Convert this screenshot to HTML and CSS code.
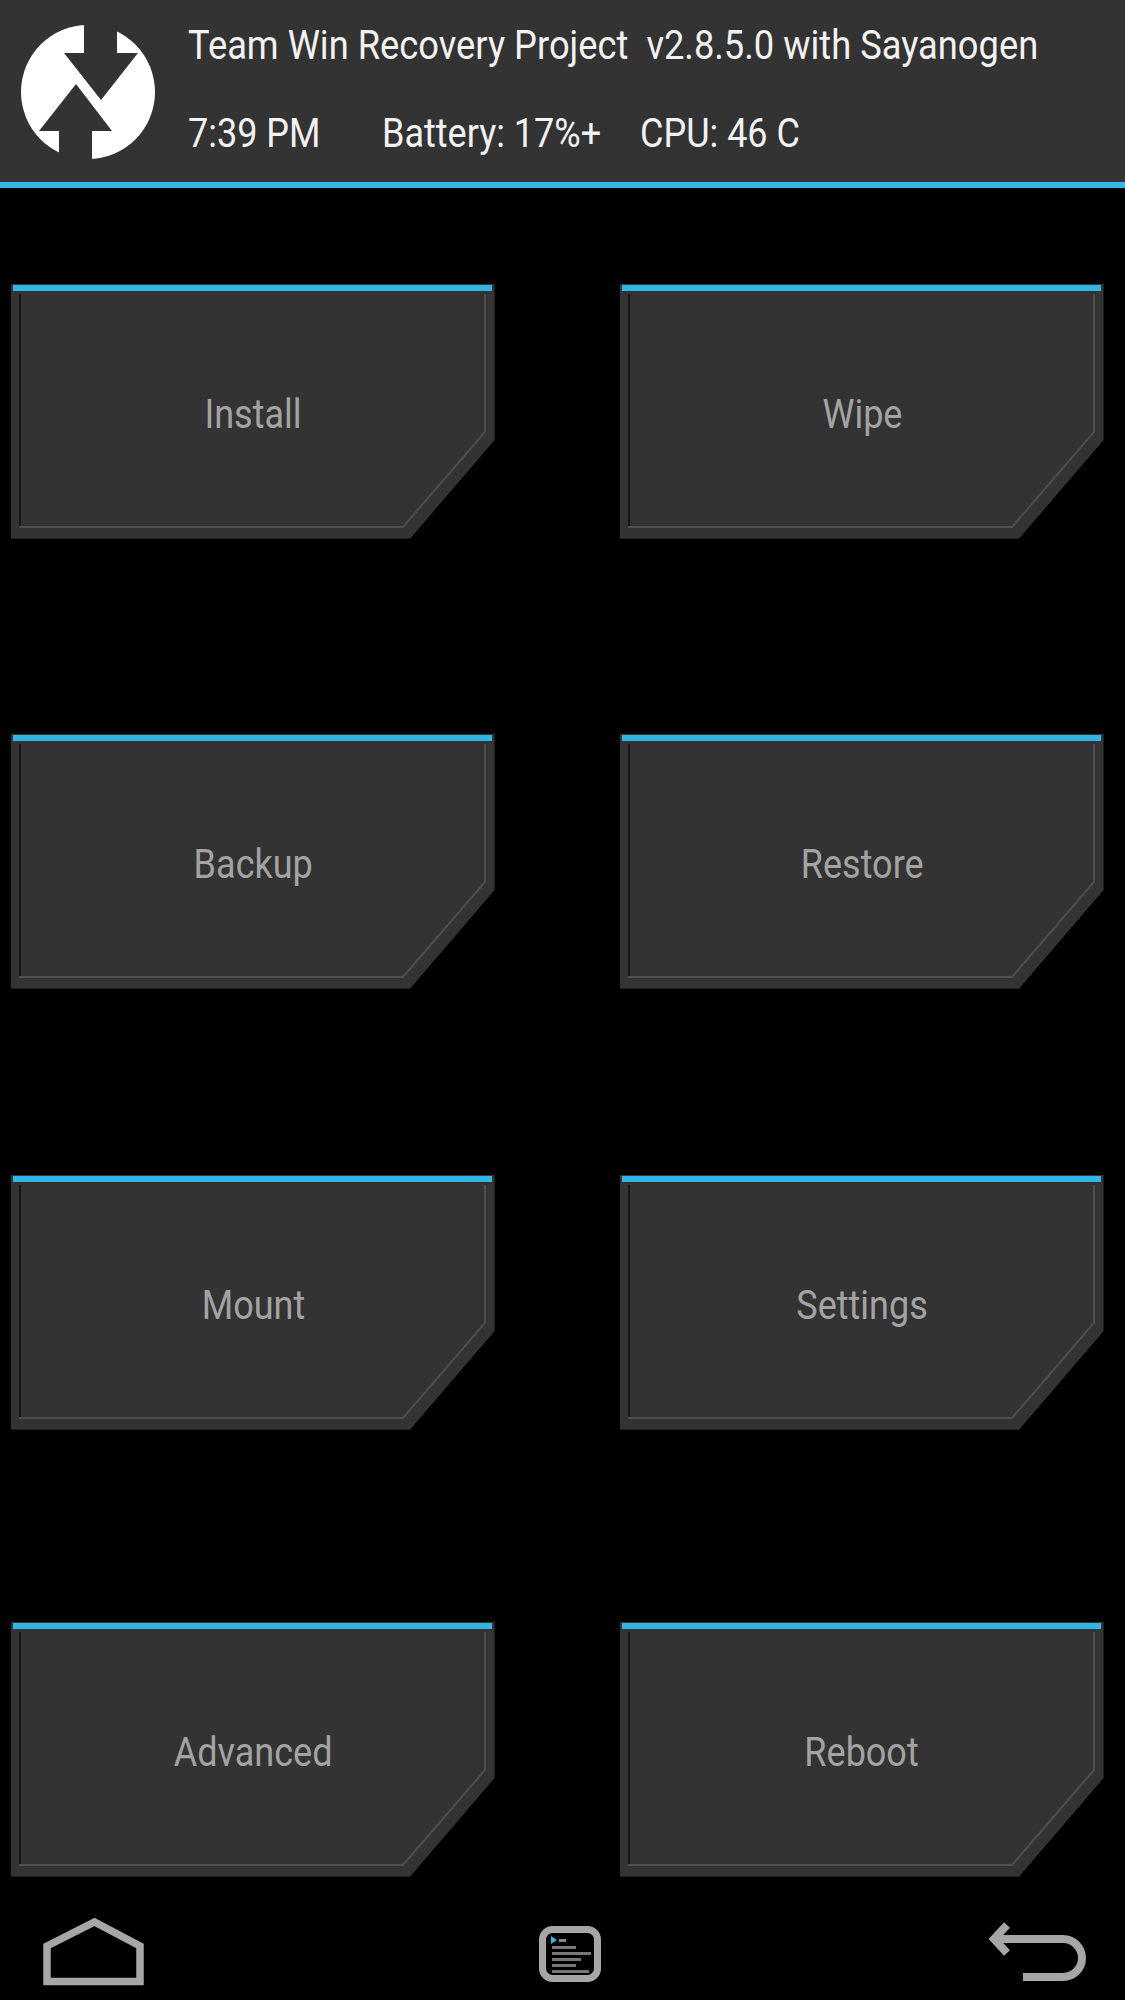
FILE: index.html
```html
<!DOCTYPE html>
<html lang="en">
    <head>
        <meta charset="UTF-8">
        <title>Team Win Recovery Project</title>
        <link rel="stylesheet" href="styles.css">
    </head>
    <body>
        <svg class="defs" width="0" height="0">
            <symbol id="btn-shape" viewBox="0 0 484 256">
                <polygon points="0,0 483,0 483,156 399,254 0,254" fill="#333" stroke="#3a3a3a" stroke-width="1"/>
                <rect x="2" y="1" width="479" height="6" fill="#33b5e5"/>
                <rect x="8" y="10" width="2" height="232" fill="#161616"/>
                <polyline points="474,10 474,148 392,243 8,243" fill="none" stroke="#4e4e4e" stroke-width="2"/>
            </symbol>
        </svg>

        <header class="top-bar">
            <svg class="logo" viewBox="0 0 134 134">
                <circle cx="67" cy="67" r="67" fill="#fff"/>
                <polygon points="63,-2 96,-2 96,28 117,28 80,75 43,28 63,28" fill="#333"/>
                <polygon points="55,59 91,106 71,106 71,136 38,136 38,106 18,106" fill="#333"/>
            </svg>
            <div class="top-text">
                <div class="top-title"><span>Team Win Recovery Project&nbsp; v2.8.5.0 with Sayanogen</span></div>
                <div class="top-stats">
                    <div class="stat-time"><span>7:39 PM</span></div>
                    <div class="stat-battery"><span>Battery: 17%+</span></div>
                    <div><span>CPU: 46 C</span></div>
                </div>
            </div>
        </header>

        <main class="menu">
            <div class="menu-row">
                <a class="menu-btn"><svg class="btn-bg"><use href="#btn-shape"/></svg><span>Install</span></a>
                <a class="menu-btn"><svg class="btn-bg"><use href="#btn-shape"/></svg><span>Wipe</span></a>
            </div>
            <div class="menu-row row-backup">
                <a class="menu-btn"><svg class="btn-bg"><use href="#btn-shape"/></svg><span>Backup</span></a>
                <a class="menu-btn"><svg class="btn-bg"><use href="#btn-shape"/></svg><span>Restore</span></a>
            </div>
            <div class="menu-row row-mount">
                <a class="menu-btn"><svg class="btn-bg"><use href="#btn-shape"/></svg><span>Mount</span></a>
                <a class="menu-btn"><svg class="btn-bg"><use href="#btn-shape"/></svg><span>Settings</span></a>
            </div>
            <div class="menu-row row-advanced">
                <a class="menu-btn"><svg class="btn-bg"><use href="#btn-shape"/></svg><span>Advanced</span></a>
                <a class="menu-btn"><svg class="btn-bg"><use href="#btn-shape"/></svg><span>Reboot</span></a>
            </div>
        </main>

        <footer class="nav-bar">
            <svg class="nav-home" viewBox="0 0 102 68">
                <polygon points="4,28 51.500,4 97,28 97,63.500 4,63.500" fill="none" stroke="#a6a6a6" stroke-width="7.500"/>
            </svg>
            <svg class="nav-console" viewBox="0 0 62 56">
                <rect x="3.500" y="3.500" width="55" height="49" rx="10" fill="none" stroke="#a6a6a6" stroke-width="7"/>
                <polygon points="12,10 18,14 12,18" fill="#33b5e5"/>
                <rect x="20" y="13" width="7" height="3" fill="#888"/>
                <rect x="13" y="20" width="24" height="3" fill="#777"/>
                <rect x="13" y="26" width="39" height="3" fill="#777"/>
                <rect x="13" y="32" width="29" height="3" fill="#777"/>
                <rect x="13" y="38" width="24" height="3" fill="#777"/>
                <rect x="13" y="44" width="37" height="3" fill="#777"/>
            </svg>
            <svg class="nav-back" viewBox="0 0 104 70">
                <path d="M10,21 H79 A19,19 0 0 1 79,59 H39" fill="none" stroke="#a6a6a6" stroke-width="8"/>
                <path d="M23,7 L10,21 L23,35" fill="none" stroke="#a6a6a6" stroke-width="8"/>
            </svg>
        </footer>
    </body>
</html>
```

FILE: styles.css
```css
html, body {
    margin: 0;
    padding: 0;
}
body {
    width: 1125px;
    height: 2000px;
    overflow: hidden;
    background: #000;
    font-family: Roboto, "Liberation Sans", sans-serif;
    display: flex;
    flex-direction: column;
}
.defs {
    position: absolute;
}

.top-bar {
    height: 182px;
    background: #333;
    border-bottom: 6px solid #33b5e5;
    display: flex;
    align-items: flex-start;
    padding-left: 21px;
}
.logo {
    width: 134px;
    height: 134px;
    margin-top: 25px;
    flex-shrink: 0;
}
.top-text {
    margin-left: 33px;
    color: #f2f2f2;
    font-size: 40px;
    line-height: 48px;
}
/* the device font is narrower than Roboto */
.top-text span {
    display: inline-block;
    transform: scaleX(0.9);
    transform-origin: left center;
}
.top-title {
    margin-top: 22px;
    white-space: nowrap;
}
.top-title span {
    transform: scaleX(0.907);
}
.top-stats {
    margin-top: 40px;
    display: flex;
    white-space: nowrap;
}
.stat-time {
    width: 194px;
}
.stat-battery {
    width: 258px;
}

.menu {
    padding: 96px 0 0 11px;
    display: flex;
    flex-direction: column;
}
.menu-row {
    display: flex;
    gap: 125px;
}
.row-backup {
    margin-top: 194px;
}
.row-mount {
    margin-top: 185px;
}
.row-advanced {
    margin-top: 191px;
}
.menu-btn {
    position: relative;
    width: 484px;
    height: 256px;
    display: flex;
    align-items: center;
    justify-content: center;
    color: #a3a3a3;
    font-size: 40px;
}
.menu-btn span {
    position: relative;
    padding-top: 4px;
    transform: scaleX(0.9);
}
.btn-bg {
    position: absolute;
    left: 0;
    top: 0;
    width: 484px;
    height: 256px;
}

.nav-bar {
    position: relative;
    flex: 1;
}
.nav-home {
    position: absolute;
    left: 43px;
    bottom: 14px;
    width: 102px;
    height: 68px;
}
.nav-console {
    position: absolute;
    left: 539px;
    bottom: 18px;
    width: 62px;
    height: 56px;
}
.nav-back {
    position: absolute;
    left: 984px;
    bottom: 12px;
    width: 104px;
    height: 70px;
}
```
